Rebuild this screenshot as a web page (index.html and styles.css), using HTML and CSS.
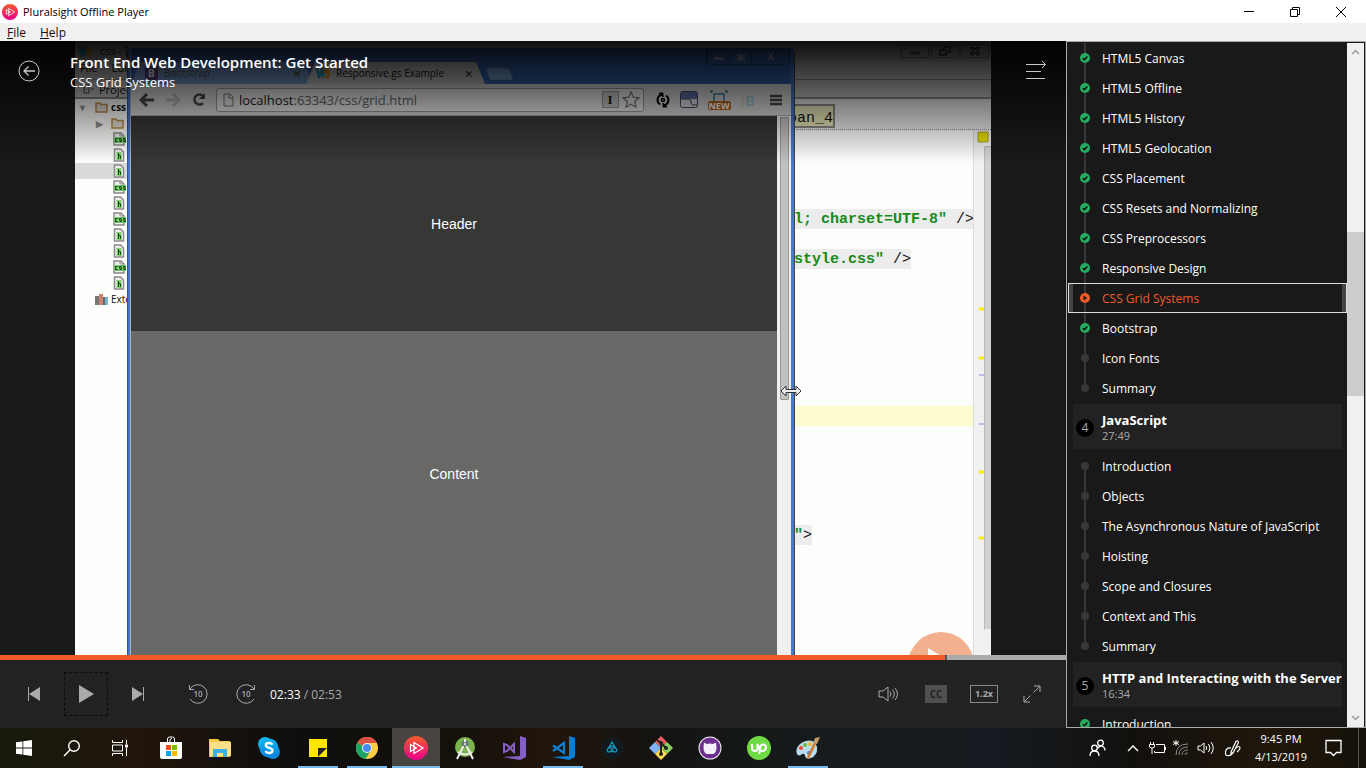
FILE: index.html
```html
<!DOCTYPE html>
<html lang="en">
<head>
<meta charset="utf-8">
<title>Pluralsight Offline Player</title>
<link rel="stylesheet" href="styles.css">
</head>
<body>
<svg class="defs" aria-hidden="true">
  <defs>
    <linearGradient id="ps" x1="0" y1="0" x2="0" y2="1"><stop offset="0" stop-color="#f15b2a"/><stop offset="1" stop-color="#ec008c"/></linearGradient>
    <linearGradient id="sky" x1="0" y1="0" x2="0" y2="1"><stop offset="0" stop-color="#12b4f1"/><stop offset="1" stop-color="#0a84d8"/></linearGradient>
    <symbol id="logo" viewBox="0 0 24 24"><circle cx="12" cy="12" r="12" fill="url(#ps)"/><path d="M10 6.500 19 12l-9 5.500zM6.500 8.500v7L12.500 12z" fill="none" stroke="#fff" stroke-width="1.200"/></symbol>
    <symbol id="done" viewBox="0 0 12 12"><circle cx="6" cy="6" r="5" fill="#26ab5f"/><path d="M3.800 6.200 5.400 7.600 8.400 4.500" fill="none" stroke="#111" stroke-width="1.500"/></symbol>
    <symbol id="now" viewBox="0 0 12 12"><circle cx="6" cy="6" r="5" fill="#f15b2a"/><path d="M4.500 3.500v5L8.300 6z" fill="#191919"/></symbol>
    <symbol id="todo" viewBox="0 0 12 12"><circle cx="6" cy="6" r="4" fill="#373737"/></symbol>
    <symbol id="fcss" viewBox="0 0 13 14"><path d="M1 1h7l3 3v9H1z" fill="#eee" stroke="#8b8b8b" stroke-width="1.500"/><path d="M7 1v3h4" fill="none" stroke="#8b8b8b"/><path d="M1 5h12v6H1z" fill="#6ecb63"/><path d="M4.500 6.500h-2v3h2M8.500 6.500h-2v1.500h2v1.500h-2M12.500 6.500h-2v1.500h2v1.500h-2" fill="none" stroke="#143f14"/></symbol>
    <symbol id="fh" viewBox="0 0 13 14"><path d="M1.500 1h6l3 3v9h-9z" fill="#eee" stroke="#8b8b8b" stroke-width="1.500"/><path d="M3.500 4h5v8h-5z" fill="#7fd46f"/><path d="M5.500 5v6M7.500 8v3M5 7.500h2.500" fill="none" stroke="#143f14"/></symbol>
    <symbol id="folder" viewBox="0 0 13 12"><path d="M1 2h4l1 1.500h6V11H1z" fill="#e5dfd5" stroke="#b98a4a" stroke-width="1.500"/></symbol>
    <symbol id="ws" viewBox="0 0 14 12"><path d="m1 1 2 9 2-6 2 6 1-9" fill="none" stroke="#249bc4" stroke-width="2.500"/><path d="M13 2H9v3.500h3.500V10H8.500" fill="none" stroke="#e89028" stroke-width="2.500"/></symbol>
  </defs>
</svg>
<div class="desktop">
  <header class="titlebar">
    <svg class="app-logo"><use href="#logo"/></svg>
    <span class="app-name">Pluralsight Offline Player</span>
    <div class="window-buttons">
      <button aria-label="Minimize"><svg width="12" height="12"><path d="M1 5.500h10" stroke="#000"/></svg></button>
      <button aria-label="Restore"><svg width="12" height="12" fill="none" stroke="#000"><path d="M1.500 3.500h7v7h-7zM3.500 3V1.500h7v7H9"/></svg></button>
      <button aria-label="Close"><svg width="12" height="12" stroke="#000"><path d="m1 1 10 10M11 1 1 11"/></svg></button>
    </div>
  </header>
  <nav class="menubar"><button><u>F</u>ile</button><button><u>H</u>elp</button></nav>

  <div class="app">
    <main class="player">
      <section class="stage">
        <div class="frame">
          <div class="ide-top">
            <div class="ide-title"><svg width="14" height="12"><use href="#ws"/></svg><span>css - [</span>
              <div class="ide-buttons">
                <i><svg width="12" height="10"><path d="M2 6h8v2H2z" fill="none" stroke="#333"/></svg></i>
                <i><svg width="12" height="10"><path d="M1 4h6v5H1zM5 4V1h6v5H8" fill="none" stroke="#333" stroke-width="1.500"/></svg></i>
                <i><svg width="12" height="10"><path d="m2 1 8 8M10 1 2 9" stroke="#333" stroke-width="3"/><path d="m3 2 6 6M9 2 3 8" stroke="#ccc"/></svg></i>
              </div>
            </div>
            <div class="ide-menu"><span>File</span><span>Edit</span></div>
            <div class="ide-project"><svg width="12" height="10"><path d="M1 1h5v8H1zM8 5h3M3 5h1" fill="none" stroke="#345"/></svg>Project</div>
          </div>
          <div class="ide-body">
            <div class="tree">
              <div class="row"><b class="tri">▼</b><svg class="dir"><use href="#folder"/></svg><b>css</b></div>
              <div class="row sub"><b class="tri">▶</b><svg class="dir"><use href="#folder"/></svg></div>
              <div class="row file"><svg><use href="#fcss"/></svg></div>
              <div class="row file"><svg><use href="#fh"/></svg></div>
              <div class="row file picked"><svg><use href="#fh"/></svg></div>
              <div class="row file"><svg><use href="#fcss"/></svg></div>
              <div class="row file"><svg><use href="#fh"/></svg></div>
              <div class="row file"><svg><use href="#fcss"/></svg></div>
              <div class="row file"><svg><use href="#fh"/></svg></div>
              <div class="row file"><svg><use href="#fh"/></svg></div>
              <div class="row file"><svg><use href="#fcss"/></svg></div>
              <div class="row file"><svg><use href="#fh"/></svg></div>
              <div class="row ext"><svg class="lib" viewBox="0 0 13 12"><path d="M0 3h4v9H0z" fill="#777"/><path d="M4 1h4v11H4z" fill="#d08070"/><path d="M8 4h2v8H8z" fill="#666"/><path d="M10 4h3v8h-3z" fill="#75b5cf"/></svg>Exte</div>
            </div>
            <div class="editor">
              <div class="crumbs"><span>pan_4</span></div>
              <div class="code-area">
                <div class="code">
                  <pre><span><em>l; charset=UTF-8"</em> /&gt;</span></pre>
                  <pre class="l2"><span><em>style.css"</em> /&gt;</span></pre>
                  <pre class="l3"></pre>
                  <pre class="l4"><span><em>"</em>&gt;</span></pre>
                </div>
                <div class="ruler">
                  <svg viewBox="0 0 18 525" width="18" height="525"><path d="M4 2h10v10H4z" fill="#e2dc00" stroke="#a5a23b"/><path d="M10.500 499.500v-483H18" fill="none" stroke="#bbb"/><path d="M11 17h7v482h-7z" fill="#d2d2d2"/><path d="M5 179h5M5 228h5M5 342h5M5 408h5" stroke="#fbf000" stroke-width="3"/><path d="M5 245h5M5 294h5" stroke="#bcbce8" stroke-width="2"/></svg>
                </div>
              </div>
            </div>
          </div>
          <svg class="watermark" viewBox="0 0 66 66"><circle cx="33" cy="33" r="33" fill="#f2b08f"/><path d="M20 16v34l28-17z" fill="#fff"/></svg>

          <div class="browser">
            <div class="tabs">
              <div class="tab idle"><span class="bs">B</span>Bootstrap<b>×</b></div>
              <div class="tab front"><svg width="14" height="12"><use href="#ws"/></svg>Responsive.gs Example<b>×</b></div>
              <svg class="newtab" viewBox="0 0 28 13"><path d="M1 1h21q2 0 3 3l3 9H7q-2 0-3-3z" fill="#7aa4d8" stroke="#5d80b0"/></svg>
              <div class="win7"><i>▬</i><i>▣</i><i class="wide">X</i></div>
            </div>
            <div class="toolbar">
              <svg width="16" height="14"><path d="M15 7H3M8 1 2 7l6 6" fill="none" stroke="#484848" stroke-width="3"/></svg>
              <svg width="16" height="14"><path d="M1 7h12M8 1l6 6-6 6" fill="none" stroke="#b5b5b5" stroke-width="3"/></svg>
              <svg width="15" height="15"><path d="M12 4a5 5 0 1 0 0 7" fill="none" stroke="#484848" stroke-width="2.500"/><path d="M14 1v6H8z" fill="#484848"/></svg>
              <div class="omnibox">
                <svg width="11" height="14"><path d="M1 1h6l3 3v9H1zM6 1v4h4" fill="none" stroke="#777"/></svg>
                <span class="url"><strong>localhost</strong>:63343/css/grid.html</span>
                <b class="ibeam">I</b>
                <svg width="18" height="17" viewBox="0 0 18 17"><path d="m9 1 2.300 5.200 5.700.6-4.300 3.800 1.300 5.600L9 13.300l-5 2.900 1.300-5.600L1 6.800l5.700-.6z" fill="none" stroke="#777" stroke-width="1.300"/></svg>
              </div>
              <svg width="14" height="16" fill="none" stroke="#000" stroke-width="2"><path d="M6 2.500a5.500 5.500 0 0 0-2 10M8 13.500a5.500 5.500 0 0 0 2-10"/><path d="M3 1h4v4zM11 15H7v-4z" fill="#000" stroke-width="1"/><circle cx="7" cy="8" r="1.500" stroke-width="1.500"/></svg>
              <svg width="18" height="17"><rect x=".5" y=".5" width="17" height="16" rx="2" fill="#ddd" stroke="#446"/><path d="M1 1h16v7H1z" fill="#5a6ea0"/><path d="M1 8h8q2 0 2 3t2 3h4" fill="none" stroke="#446"/></svg>
              <div class="new"><svg width="18" height="11"><path d="M1 3V1h2M15 1h2v2M4 11V4h10v7" fill="none" stroke="#357a96" stroke-width="1.500"/></svg><b>NEW</b></div>
              <span class="jb"><i>J</i>B</span>
              <svg width="13" height="12"><path d="M1 2h12M1 6h12M1 10h12" stroke="#444" stroke-width="2.500"/></svg>
            </div>
            <div class="page">
              <div class="page-main">
                <div class="page-head">Header</div>
                <div class="page-content">Content</div>
              </div>
              <div class="page-scroll"><i></i></div>
            </div>
            <svg class="cursor" viewBox="0 0 22 12"><path d="M1 6 6 1v3.500h10V1l5 5-5 5V7.500H6V11z" fill="#eee" stroke="#333"/></svg>
          </div>
        </div>
        <div class="overlay">
          <button class="back" aria-label="Back"><svg width="22" height="22" fill="none" stroke="#c8c8c8"><circle cx="11" cy="11" r="10"/><path d="M17 11H6M10.500 6.500 6 11l4.500 4.500" stroke-width="1.300"/></svg></button>
          <div class="heading"><h1>Front End Web Development: Get Started</h1><h2>CSS Grid Systems</h2></div>
          <button class="toc" aria-label="Toggle contents"><svg width="22" height="20" fill="none" stroke="#c8c8c8"><path d="M1 4.500h19M17 1l3.500 3.500L17 8M1 11.500h15M1 18.500h19"/></svg></button>
        </div>
      </section>
      <input class="seek" type="range" min="0" max="1000" value="887" aria-label="Seek">
      <section class="controls">
        <button aria-label="Previous"><svg width="14" height="16"><path d="M1.500 1v14" stroke="#aaa"/><path d="M13 1v14L2 8z" fill="#aaa"/></svg></button>
        <button class="play" aria-label="Play"><svg width="16" height="18"><path d="M1 0v18l15-9z" fill="#aaa"/></svg></button>
        <button aria-label="Next"><svg width="14" height="16"><path d="M12.500 1v14" stroke="#aaa"/><path d="M1 1v14l11-7z" fill="#aaa"/></svg></button>
        <button class="skip first" aria-label="Back 10 seconds"><svg width="20" height="22" fill="none" stroke="#aaa"><path d="M2 6A9.300 9.300 0 1 1 2 16M1.500 2v4.500H6"/></svg><span>10</span></button>
        <button class="skip" aria-label="Forward 10 seconds"><svg width="20" height="22" fill="none" stroke="#aaa"><path d="M18 6a9.300 9.300 0 1 0 0 10M18.500 2v4.500H14"/></svg><span>10</span></button>
        <div class="time"><b>02:33</b> / 02:53</div>
        <div class="right">
          <button aria-label="Volume"><svg width="20" height="16" fill="none" stroke="#aaa"><path d="M1 5h4l5-4v14l-5-4H1zM12 5.500q2 2.500 0 5M14.500 3.500q3.500 4.500 0 9M17 2q5 6 0 12"/></svg></button>
          <button><span class="cc">CC</span></button>
          <button><span class="rate">1.2x</span></button>
          <button aria-label="Full screen"><svg width="18" height="18" fill="none" stroke="#aaa"><path d="M10.500 7.500 16.500 1.500M11 1h6v6M7.500 10.500l-6 6M1 11v6h6"/></svg></button>
        </div>
      </section>
    </main>

    <aside class="contents">
      <div class="list">
        <ul>
          <li><a href="#"><svg><use href="#done"/></svg>HTML5 Canvas</a></li>
          <li><a href="#"><svg><use href="#done"/></svg>HTML5 Offline</a></li>
          <li><a href="#"><svg><use href="#done"/></svg>HTML5 History</a></li>
          <li><a href="#"><svg><use href="#done"/></svg>HTML5 Geolocation</a></li>
          <li><a href="#"><svg><use href="#done"/></svg>CSS Placement</a></li>
          <li><a href="#"><svg><use href="#done"/></svg>CSS Resets and Normalizing</a></li>
          <li><a href="#"><svg><use href="#done"/></svg>CSS Preprocessors</a></li>
          <li><a href="#"><svg><use href="#done"/></svg>Responsive Design</a></li>
          <li><a href="#" class="current"><svg><use href="#now"/></svg>CSS Grid Systems</a></li>
          <li><a href="#"><svg><use href="#done"/></svg>Bootstrap</a></li>
          <li><a href="#"><svg><use href="#todo"/></svg>Icon Fonts</a></li>
          <li class="end"><a href="#"><svg><use href="#todo"/></svg>Summary</a></li>
        </ul>
        <div class="module"><span class="num">4</span><div><h3>JavaScript</h3><p>27:49</p></div></div>
        <ul>
          <li class="start"><a href="#"><svg><use href="#todo"/></svg>Introduction</a></li>
          <li><a href="#"><svg><use href="#todo"/></svg>Objects</a></li>
          <li><a href="#"><svg><use href="#todo"/></svg>The Asynchronous Nature of JavaScript</a></li>
          <li><a href="#"><svg><use href="#todo"/></svg>Hoisting</a></li>
          <li><a href="#"><svg><use href="#todo"/></svg>Scope and Closures</a></li>
          <li><a href="#"><svg><use href="#todo"/></svg>Context and This</a></li>
          <li class="end"><a href="#"><svg><use href="#todo"/></svg>Summary</a></li>
        </ul>
        <div class="module"><span class="num">5</span><div><h3>HTTP and Interacting with the Server</h3><p>16:34</p></div></div>
        <ul><li class="start"><a href="#"><svg><use href="#done"/></svg>Introduction</a></li></ul>
      </div>
      <div class="scrollbar">
        <svg width="9" height="6"><path d="M1 5 4.500 1.500 8 5" fill="none" stroke="#999" stroke-width="1.500"/></svg>
        <i></i>
        <svg width="9" height="6"><path d="M1 1l3.500 3.500L8 1" fill="none" stroke="#999" stroke-width="1.500"/></svg>
      </div>
    </aside>
  </div>

  <footer class="taskbar">
    <button aria-label="Start"><svg width="16" height="16" fill="#fff"><path d="M0 2.300 6.500 1.400v6.200H0zM7.300 1.300 16 0v7.600H7.300zM0 8.400h6.500v6.200L0 13.700zM7.300 8.400H16V16l-8.700-1.300z"/></svg></button>
    <button aria-label="Search"><svg width="18" height="18" fill="none" stroke="#fff" stroke-width="1.400"><circle cx="11" cy="7" r="5.300"/><path d="M7.200 10.800 1 17"/></svg></button>
    <button aria-label="Task view"><svg width="18" height="16" fill="none" stroke="#fff"><path d="M1.500 0v2.500h10V0M1.500 5h10v6h-10zM1.500 16v-2.500h10V16M15.500 0v4M15.500 8v8"/><path d="M14 4.500h3v3h-3z" fill="#fff" stroke="none"/></svg></button>
    <div class="pinned">
      <button aria-label="Microsoft Store"><svg width="24" height="24"><path d="M8.500 8V3q0-2 2-2h3q2 0 2 2v5M11 7V4q0-1.500 2-1.500" fill="none" stroke="#fff"/><path d="M1 6h22v15q0 2-2 2H3q-2 0-2-2z" fill="#fff"/><path d="M7 9h5v5H7z" fill="#f25022"/><path d="M13 9h5v5h-5z" fill="#7fba00"/><path d="M7 15h5v5H7z" fill="#00a4ef"/><path d="M13 15h5v5h-5z" fill="#ffb900"/></svg></button>
      <button aria-label="File Explorer"><svg width="22" height="20"><path d="M0 1h9l2 2h10v16H0z" fill="#f7c843"/><path d="M1 4h21v14H1z" fill="#ffe08a"/><path d="M4 19v-8h14v8h-4v-4H8v4z" fill="#3bb1e8"/></svg></button>
      <button aria-label="Skype"><svg width="22" height="22"><circle cx="7" cy="7" r="7" fill="#16b5f3"/><circle cx="15" cy="15" r="7" fill="#0c87da"/><circle cx="11" cy="11" r="9.500" fill="url(#sky)"/><path d="M14.500 7.700Q13.300 6 11 6 7.800 6 7.800 8.300q0 1.900 3.200 2.500 3.500.7 3.500 2.700 0 2.500-3.500 2.500-2.400 0-3.700-1.800" fill="none" stroke="#fff" stroke-width="2.300"/></svg></button>
      <button class="open" aria-label="Sticky Notes"><svg width="18" height="18"><path d="M0 0h18v9L9 18H0z" fill="#ffe600"/><path d="M18 9H9v9z" fill="#222"/><path d="M18 9v9H9z" fill="#ffe600"/></svg></button>
      <button class="open" aria-label="Chrome"><svg width="22" height="22"><circle cx="11" cy="11" r="11" fill="#ffcd42"/><path d="M11 11 1.500 5.500A11 11 0 0 0 9.500 22l5.500-9z" fill="#1da462"/><path d="M11 11 1.500 5.500A11 11 0 0 1 20.800 6H11z" fill="#dd5145"/><circle cx="11" cy="11" r="5" fill="#f1f1f1"/><circle cx="11" cy="11" r="4" fill="#4c8bf5"/></svg></button>
      <button class="active" aria-label="Pluralsight"><svg width="24" height="24"><use href="#logo"/></svg></button>
      <button aria-label="Android Studio"><svg width="22" height="24"><circle cx="11" cy="11" r="10" fill="#7cb34d"/><circle cx="11" cy="8" r="3.500" fill="#546e7a"/><path d="M9.500 10 3 23M12.500 10 19 23M4 16q7 5 14 0M11 3v3" fill="none" stroke="#eee" stroke-width="2"/><circle cx="11" cy="8" r="1.500" fill="#ccc"/></svg></button>
      <button aria-label="Visual Studio"><svg width="24" height="24" fill="none" stroke="#865fc5" stroke-width="2"><path d="M2 8v8l3-1 7-7v8L5 9z"/><path d="M18 0 24 2v19l-6 3L1 21l17-1z" fill="#865fc5" stroke="none"/></svg></button>
      <button class="open" aria-label="Visual Studio Code"><svg width="24" height="24" fill="none" stroke="#0a7fd0" stroke-width="2.200"><path d="M2 9.500 13 17V7L2 15"/><path d="M18 0 24 2v19l-6 3L1 21l17-1z" fill="#0a7fd0" stroke="none"/></svg></button>
      <button aria-label="Browser"><svg width="22" height="24" fill="none"><circle cx="11" cy="12" r="10.500" fill="#11191d" stroke="#26333a" stroke-dasharray="1 2"/><path d="m11 6-3 5 3-1 3 1zM6 14q1-3 4-2l.5 3.500-3.500.5zM16 14q-1-3-4-2l-.5 3.500 3.500.5z" stroke="#1a91b5" stroke-width="1.300"/></svg></button>
      <button aria-label="Git"><svg width="24" height="24"><path d="m12 0 6 6-6 6-6-6z" fill="#f05d5d"/><path d="m6 6 6 6-6 6-6-6z" fill="#80b3ff"/><path d="m18 6 6 6-6 6-6-6z" fill="#8dd35f"/><path d="m12 12 6 6-6 6-6-6z" fill="#ffdd55"/><path d="m8 4 4 3v11M12 7l5 5" fill="none" stroke="#222" stroke-width="2"/><g fill="#222"><circle cx="12" cy="7" r="2"/><circle cx="17" cy="12" r="2"/><circle cx="12" cy="18" r="2"/></g></svg></button>
      <button aria-label="GitHub"><svg width="24" height="24"><circle cx="12" cy="12" r="11.500" fill="#eee"/><circle cx="12" cy="12" r="10.500" fill="#6d2f8f"/><path d="M6 6.500 9 8q3-1 6 0l3-1.500.5 4.500q0 6-3.500 7H9q-3.500-1-3.500-7z" fill="#f4effa"/></svg></button>
      <button aria-label="Upwork"><svg width="24" height="24" fill="none" stroke="#fff" stroke-width="2"><circle cx="12" cy="12" r="12" fill="#6fda44" stroke="none"/><path d="M5 8v4q0 3 3 3 2.500 0 2.500-3V8q2 7 4.500 7 3.500 0 4-3.200 0-3.300-3-3.300-2.500 0-3 4L12.300 18"/></svg></button>
      <button class="open" aria-label="Paint"><svg width="24" height="24"><path d="M10 5C2 7-1 14 1 18q2 3 5 0 3-1 3 2 1 4 6 2 7-3 6-11-2-8-11-6z" fill="#b9dcec"/><circle cx="5" cy="12" r="2" fill="#e34b3f"/><circle cx="9" cy="9" r="2" fill="#6cbb45"/><circle cx="14" cy="8" r="2" fill="#f2b632"/><circle cx="13" cy="17" r="2" fill="#4b80c9"/><path d="m12 22 7-15" stroke="#d37a28" stroke-width="2.500"/><path d="m17 7 2-5 5-1-3 7z" fill="#c49a6c"/></svg></button>
    </div>
    <div class="tray">
      <button class="people" aria-label="People"><svg width="18" height="18" fill="none" stroke="#fff" stroke-width="1.300"><circle cx="5.500" cy="9" r="2.800"/><path d="M1 17q0-5 4.500-5t4.500 5"/><circle cx="11.500" cy="4" r="2.800"/><path d="M9 9q2.500-3.500 5.500-1 1.500 1 1.500 3.500"/></svg></button>
      <button aria-label="Show hidden icons"><svg width="12" height="8" fill="none" stroke="#fff" stroke-width="1.400"><path d="m1 7 5-5 5 5"/></svg></button>
      <button aria-label="Battery"><svg width="17" height="14" fill="none" stroke="#fff"><path d="M7 3.500h8.500v8H5.500V10M15.500 6h1v3M1.500 1v3M4.500 1v3M.500 3.500h5V6q-2.500 2.500-5 0zM3 7v6"/></svg></button>
      <button aria-label="Network"><svg width="16" height="16" fill="none" stroke="#888"><path d="M3 15Q3 4 15 4M6 15q0-8 9-8M9 15q0-5 6-5M12 15q0-2 3-2"/><path d="M3 0v6M0 1.500l6 3M6 1.500l-6 3" stroke="#fff"/></svg></button>
      <button aria-label="Volume"><svg width="17" height="14" fill="none" stroke="#fff"><path d="M1 5h2.500L7 2v10L3.500 9H1zM9 5q1.500 2 0 4M11.500 3q3 4 0 8M14 1q4.500 6 0 12"/></svg></button>
      <button class="pen" aria-label="Ink"><svg width="18" height="17" fill="none" stroke="#fff" stroke-width="1.200"><path d="M7 12 12 1.500q2-1.500 2.500 1L9 13l-2 1.500zM7 8q-5-.5-5.500 4T5 15.500q2.500 0 3.500-3M12 8q4-3 4 0 0 2-3 4"/></svg></button>
      <button class="clock"><span>9:45 PM</span><span>4/13/2019</span></button>
      <button class="action" aria-label="Notifications"><svg width="18" height="18" fill="none" stroke="#fff" stroke-width="1.300"><path d="M1 1.500h15v12h-4.500l-3 3-3-3H1z"/></svg></button>
      <span class="peek"></span>
    </div>
  </footer>
</div>
</body>
</html>
```

FILE: styles.css
```css
* { box-sizing: border-box; }
body { margin: 0; background: #000; font-family: "Open Sans", "Noto Sans", sans-serif; font-size: 12px; color: #fff; }
button { margin: 0; padding: 0; border: 0; background: none; color: inherit; font: inherit; display: flex; align-items: center; justify-content: center; }
h1, h2, h3, p, ul, pre { margin: 0; padding: 0; font-size: inherit; font-weight: inherit; }
ul { list-style: none; }
svg { flex: none; display: block; }
i { font-style: normal; }
.defs { position: absolute; width: 0; height: 0; }

.desktop { display: flex; flex-direction: column; height: 100vh; overflow: hidden; }
.titlebar { display: flex; align-items: center; flex: none; height: 23px; background: #fff; color: #000; }
.app-logo { width: 16px; height: 16px; margin: 0 5px 0 2px; }
.app-name { font-size: 11px; }
.window-buttons { display: flex; margin-left: auto; padding-right: 2px; }
.window-buttons button { width: 46px; height: 21px; }
.menubar { display: flex; gap: 14px; flex: none; height: 18px; padding-left: 7px; background: #f0f0f0; color: #111; }

.app { display: flex; flex: 1; min-height: 0; }
.player { display: flex; flex-direction: column; flex: 1; min-width: 0; }
.stage { position: relative; flex: 1; min-height: 0; padding: 0 75px; background: #191919; overflow: hidden; }
.overlay { position: absolute; inset: 0 0 auto; height: 122px; display: flex; align-items: flex-start; padding: 11px 19px 0 18px; background: linear-gradient(rgba(0,0,0,.92), rgba(0,0,0,0)); }
.overlay button { margin-top: 8px; }
.heading { flex: 1; padding-left: 30px; line-height: 20px; }
.heading h1 { font-size: 15px; font-weight: 600; }
.heading h2 { font-size: 13px; }

.frame { position: relative; display: flex; flex-direction: column; height: 100%; overflow: hidden; background: #fdfdfb; color: #111; }
.ide-top { flex: none; height: 58px; background: #c4c4c4; border-bottom: 2px solid #888; font-size: 11px; }
.ide-title { display: flex; align-items: center; gap: 8px; height: 19px; padding-left: 3px; background: #b5b5b5; }
.ide-buttons { display: flex; gap: 2px; margin-left: auto; padding-right: 2px; }
.ide-buttons i { display: flex; justify-content: center; align-items: center; width: 28px; height: 14px; border: 1px solid #777; border-radius: 2px; }
.ide-menu { display: flex; gap: 14px; height: 20px; padding-left: 5px; border-bottom: 1px solid #888; }
.ide-project { display: flex; align-items: center; gap: 4px; padding-left: 8px; height: 18px; }
.ide-body { display: flex; flex: 1; min-height: 0; }
.tree { width: 52px; overflow: hidden; font-size: 10px; }
.row { display: flex; align-items: center; height: 16px; white-space: nowrap; }
.row svg { width: 13px; height: 14px; }
.row .dir, .row .lib { height: 12px; margin-right: 3px; }
.row .tri { width: 12px; margin: 0 5px 0 3px; color: #909090; font-size: 9px; }
.sub { padding-left: 18px; }
.file { padding-left: 38px; }
.ext { padding-left: 20px; }
.picked { background: #dadada; }
.editor { flex: 1; display: flex; flex-direction: column; padding-left: 667px; min-width: 0; }
.crumbs { height: 32px; padding-top: 5px; background: #e8e8e8; border-bottom: 1px dotted #888; font: 15px "Liberation Mono", monospace; }
.crumbs span { display: block; width: 41px; height: 24px; padding-left: 1px; line-height: 26px; background: #e5e5b8; border: 2px solid #888; border-left: 0; direction: rtl; overflow: hidden; }
.code-area { display: flex; flex: 1; }
.code { flex: 1; padding-top: 79px; min-width: 0; }
.code pre { height: 20px; font: 15px/20px "Liberation Mono", monospace; }
.code span { display: block; width: max-content; line-height: 22px; height: 20px; background: #ececec; }
.code em { font-style: normal; font-weight: bold; color: #178a17; }
.code .l2 { margin-top: 20px; }
.code .l3 { margin-top: 137px; background: #fdfdd0; }
.code .l4 { margin-top: 99px; }
.ruler { width: 18px; background: #f1f1f1; border-left: 1px solid #ddd; }
.watermark { position: absolute; right: 17px; bottom: -43px; width: 66px; height: 66px; }

.browser { position: absolute; top: 7px; bottom: 0; left: 52px; width: 668px; display: flex; flex-direction: column; padding: 0 4px; background: linear-gradient(90deg, #31549a 0 1px, #4673c2 1px 3px, #aab4c2 3px 4px, #3a62b0 4px 99.4%, #4878c8 99.4% 99.8%, #444 99.8%); border-radius: 5px 5px 0 0; }
.tabs { position: relative; display: flex; align-items: flex-end; height: 36px; background: #3765b4; }
.tab { display: flex; align-items: center; gap: 6px; height: 22px; padding: 0 12px 0 14px; font-size: 10px; background: #c9c9c9; clip-path: polygon(9px 0, 95% 0, 100% 100%, 0 100%); }
.tab b { margin-left: auto; font-size: 15px; color: #555; }
.idle { width: 182px; background: #7799cc; color: #555; }
.front { width: 179px; padding-left: 10px; margin-left: -7px; }
.bs { padding: 0 3px; background: #563d7c; color: #fff; font-weight: bold; line-height: 14px; border-radius: 2px; }
.newtab { width: 28px; height: 13px; margin: 0 0 4px; }
.win7 { position: absolute; top: 0; right: 1px; display: flex; border: 1px solid #26477f; border-radius: 0 0 4px 4px; color: #a6b4cc; }
.win7 i { width: 22px; height: 15px; line-height: 15px; text-align: center; font-size: 10px; border-left: 1px solid #26477f; }
.win7 .wide { width: 38px; font-weight: bold; }
.toolbar { display: flex; align-items: center; height: 32px; padding: 0 9px 0 8px; gap: 10px; background: #d9d9d9; border-bottom: 1px solid #aaa; }
.omnibox { display: flex; align-items: center; flex: 1; height: 24px; margin-right: 2px; padding: 0 3px 0 6px; gap: 3px; background: #ececec; border: 1px solid #999; border-radius: 3px; }
.url { flex: 1; padding-left: 2px; font-size: 13px; color: #666; }
.url strong { font-weight: 400; color: #222; }
.ibeam { width: 17px; border: 1px solid #999; text-align: center; line-height: 15px; font-family: "Liberation Serif", serif; font-size: 13px; background: #ccc; }
.new { display: flex; flex-direction: column; align-items: center; }
.new b { padding: 0 1px; background: #b86418; color: #fff; font-size: 9px; line-height: 9px; border-radius: 2px; }
.jb { margin-right: 4px; color: #9fc4d0; font-size: 15px; font-weight: 600; }
.jb i { color: #d6cf9f; }
.page { display: flex; flex: 1; min-height: 0; }
.page-main { flex: 1; display: flex; flex-direction: column; color: #fff; font: 14px "Liberation Sans", sans-serif; }
.page-head { display: flex; align-items: center; justify-content: center; height: 215px; background: #373735; }
.page-content { flex: 1; padding-top: 135px; text-align: center; background: #686866; }
.page-scroll { width: 14px; padding: 1px 2px 0 3px; background: #f0f0f0; }
.page-scroll i { display: block; height: 283px; background: #c1c1c1; border: 1px solid #999; border-radius: 1px; }
.cursor { position: absolute; right: -7px; top: 337px; width: 22px; height: 12px; }

.seek { appearance: none; display: block; flex: none; width: 100%; height: 5px; margin: 0; background: linear-gradient(90deg, #f15b2a 88.7%, #555 88.7% 88.8%, #aaa 88.8%); }
.seek::-webkit-slider-thumb { appearance: none; width: 1px; height: 5px; background: #555; }
.controls { display: flex; align-items: center; flex: none; height: 68px; padding: 0 10px 0 12px; gap: 8px; background: #222; color: #aaa; }
.controls button { width: 44px; height: 44px; }
.controls .play { border: 1px dashed #0c0c0c; }
.controls .skip { position: relative; width: 40px; }
.controls .first { margin-left: 10px; }
.skip span { position: absolute; inset: 0; font-size: 8px; font-weight: 600; line-height: 44px; }
.time { margin-left: -4px; }
.time b { font-weight: 400; color: #fff; }
.right { display: flex; margin-left: auto; }
.controls .right button { width: 48px; }
.cc { width: 22px; background: #505050; color: #222; font-size: 10px; font-weight: 700; line-height: 18px; }
.rate { width: 28px; border: 1px solid #888; font-size: 9px; font-weight: 700; line-height: 16px; }

.contents { display: flex; flex: none; width: 300px; padding: 1px 1px 0 0; background: #191919; border: 1px solid #aaa; }
.list { flex: 1; min-width: 0; overflow: hidden; padding-left: 1px; }
.list li { position: relative; background: linear-gradient(#373737, #373737) 16px 0 / 2px 100% no-repeat; }
.list .end { background-size: 2px 50%; }
.list .start { background-position: 16px 100%; background-size: 2px 50%; }
.list a { display: flex; align-items: center; gap: 11px; height: 30px; padding-left: 11px; color: #fff; text-decoration: none; white-space: nowrap; }
.list a svg { width: 12px; height: 12px; }
.list .current { padding-left: 10px; border: 1px solid #ddd; box-shadow: inset 4px 0 #444, inset -4px 0 #444; color: #f15b2a; }
.module { display: flex; align-items: center; gap: 8px; height: 45px; margin: 1px 5px 2px; padding: 2px 3px 0; background: #222; line-height: 16px; white-space: nowrap; }
.module h3 { font-size: 13px; font-weight: 700; }
.module p { color: #aaa; font-size: 11px; }
.num { flex: none; width: 18px; height: 18px; border-radius: 50%; background: #000; color: #aaa; line-height: 18px; text-align: center; }
.scrollbar { display: flex; flex-direction: column; align-items: center; width: 17px; padding: 6px 0; background: #f0f0f0; }
.scrollbar i { width: 17px; height: 164px; margin: 177px 0 auto; background: #cdcdcd; }

.taskbar { display: flex; flex: none; height: 40px; background: linear-gradient(90deg, #171a0c, #20150a 10%, #0e0e0d 22%, #15110b 34%, #21150b 40%, #131311 48%, #161b1d 60%, #151a20 73%, #12100d 83%, #20170a 93%, #151109); }
.taskbar button { width: 48px; height: 40px; }
.pinned { display: flex; gap: 1px; margin-left: 3px; }
.pinned .open { background: linear-gradient(#76b9ed, #76b9ed) 50% 100% / 40px 2px no-repeat; }
.pinned .active { background: #484541; border-bottom: 2px solid #76b9ed; padding-top: 2px; }
.tray { display: flex; margin-left: auto; }
.taskbar .tray button { width: 24px; }
.taskbar .tray .people { width: 46px; }
.taskbar .tray .pen { width: 32px; }
.taskbar .tray .clock { flex-direction: column; width: 64px; font-size: 11px; line-height: 18px; }
.taskbar .tray .action { width: 41px; }
.peek { width: 13px; margin-left: -1px; background: linear-gradient(#555, #555) 5px 0 / 1px 100% no-repeat; }
```
